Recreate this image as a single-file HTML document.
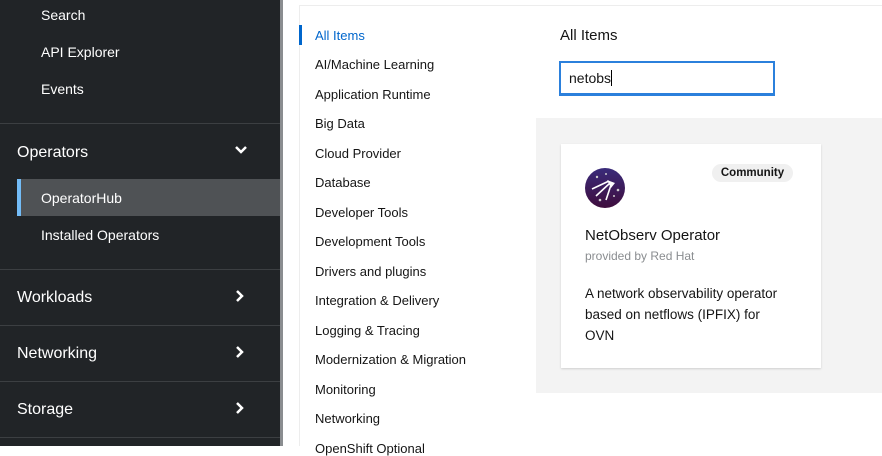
<!DOCTYPE html>
<html><head><style>
*{margin:0;padding:0;box-sizing:border-box}
body{width:882px;height:446px;overflow:hidden;background:#fff;font-family:"Liberation Sans",sans-serif;position:relative}
.sb{position:absolute;left:0;top:0;width:280px;height:446px;background:#212427}
.scr{position:absolute;left:280px;top:0;width:3px;height:446px;background:#8a8d90}
.t{position:absolute;color:#fff;white-space:nowrap}
.s{font-size:14px;left:41px}
.h{font-size:16px;left:17px}
.d{position:absolute;left:0;width:280px;height:1px;background:#3c3f42}
.chev{position:absolute;left:234px}
.c{position:absolute;left:315px;font-size:13px;color:#151515;white-space:nowrap}
</style></head><body>
<div class="sb"></div><div class="scr"></div>
<div class="t s" style="top:7px">Search</div>
<div class="t s" style="top:44px">API Explorer</div>
<div class="t s" style="top:81px">Events</div>
<div class="d" style="top:123px"></div>
<div class="t h" style="top:144px">Operators</div>
<svg class="chev" style="top:144px" width="14" height="12" viewBox="0 0 14 12"><path d="M2 3l5 5 5-5" stroke="#fff" stroke-width="2.5" fill="none"/></svg>
<div style="position:absolute;left:17px;top:179px;width:263px;height:37px;background:#4f5255"></div>
<div style="position:absolute;left:17px;top:179px;width:4px;height:37px;background:#73bcf7"></div>
<div class="t s" style="top:190px">OperatorHub</div>
<div class="t s" style="top:227px">Installed Operators</div>
<div class="d" style="top:269px"></div>
<div class="t h" style="top:289px">Workloads</div>
<svg class="chev" style="top:289px" width="12" height="14" viewBox="0 0 12 14"><path d="M3 2l5 5-5 5" stroke="#fff" stroke-width="2.5" fill="none"/></svg>
<div class="d" style="top:325px"></div>
<div class="t h" style="top:345px">Networking</div>
<svg class="chev" style="top:345px" width="12" height="14" viewBox="0 0 12 14"><path d="M3 2l5 5-5 5" stroke="#fff" stroke-width="2.5" fill="none"/></svg>
<div class="d" style="top:381px"></div>
<div class="t h" style="top:401px">Storage</div>
<svg class="chev" style="top:401px" width="12" height="14" viewBox="0 0 12 14"><path d="M3 2l5 5-5 5" stroke="#fff" stroke-width="2.5" fill="none"/></svg>
<div class="d" style="top:437px"></div>

<div style="position:absolute;left:299px;top:5px;width:583px;height:441px;border-left:1px solid #ededed;border-top:1px solid #ededed"></div>
<div style="position:absolute;left:299px;top:25px;width:3px;height:20px;background:#06c"></div>
<div class="c" style="top:28px;color:#06c">All Items</div>
<div class="c" style="top:57px">AI/Machine Learning</div>
<div class="c" style="top:87px">Application Runtime</div>
<div class="c" style="top:116px">Big Data</div>
<div class="c" style="top:146px">Cloud Provider</div>
<div class="c" style="top:175px">Database</div>
<div class="c" style="top:205px">Developer Tools</div>
<div class="c" style="top:234px">Development Tools</div>
<div class="c" style="top:264px">Drivers and plugins</div>
<div class="c" style="top:293px">Integration &amp; Delivery</div>
<div class="c" style="top:323px">Logging &amp; Tracing</div>
<div class="c" style="top:352px">Modernization &amp; Migration</div>
<div class="c" style="top:382px">Monitoring</div>
<div class="c" style="top:411px">Networking</div>
<div class="c" style="top:441px">OpenShift Optional</div>

<div style="position:absolute;left:560px;top:27px;font-size:15px;color:#151515">All Items</div>
<div style="position:absolute;left:559px;top:61px;width:216px;height:35px;border:2px solid #2b80dc;border-bottom-width:3px;background:#fff"></div>
<div style="position:absolute;left:569px;top:70px;font-size:14px;color:#151515">netobs<span style="display:inline-block;width:1px;height:16px;background:#000;vertical-align:-3px"></span></div>

<div style="position:absolute;left:536px;top:118px;width:346px;height:275px;background:#f3f3f3"></div>
<div style="position:absolute;left:561px;top:144px;width:260px;height:224px;background:#fff;box-shadow:0 1px 2px rgba(0,0,0,.15)"></div>
<svg style="position:absolute;left:585px;top:168px" width="40" height="40" viewBox="0 0 40 40"><defs><linearGradient id="g" x1="0" y1="0" x2="0" y2="1"><stop offset="0" stop-color="#3a2b7a"/><stop offset="1" stop-color="#3f0d3d"/></linearGradient></defs><circle cx="20" cy="20" r="20" fill="url(#g)"/><path d="M7 21l17-8M11 28l14-13M21 32l5-15" stroke="#fff" stroke-width="1.6" fill="none"/><path d="M22 12l8 3-4 5z" fill="#fff"/><circle cx="12" cy="9" r="1.2" fill="#ccc"/><circle cx="21" cy="6" r="1" fill="#ccc"/><circle cx="15" cy="32" r="1.3" fill="#ccc"/><circle cx="33" cy="22" r="1.3" fill="#ccc"/><circle cx="29" cy="28" r="1" fill="#ccc"/></svg>
<div style="position:absolute;left:712px;top:164px;width:81px;height:18px;border-radius:9px;background:#f0f0f0;font-size:11.5px;font-weight:bold;color:#151515;text-align:center;line-height:18px">Community</div>
<div style="position:absolute;left:585px;top:227px;font-size:15px;color:#151515">NetObserv Operator</div>
<div style="position:absolute;left:585px;top:249px;font-size:12px;color:#8a8d90">provided by Red Hat</div>
<div style="position:absolute;left:585px;top:283px;width:230px;font-size:13.5px;line-height:21px;color:#151515;white-space:nowrap">A network observability operator<br>based on netflows (IPFIX) for<br>OVN</div>
</body></html>
